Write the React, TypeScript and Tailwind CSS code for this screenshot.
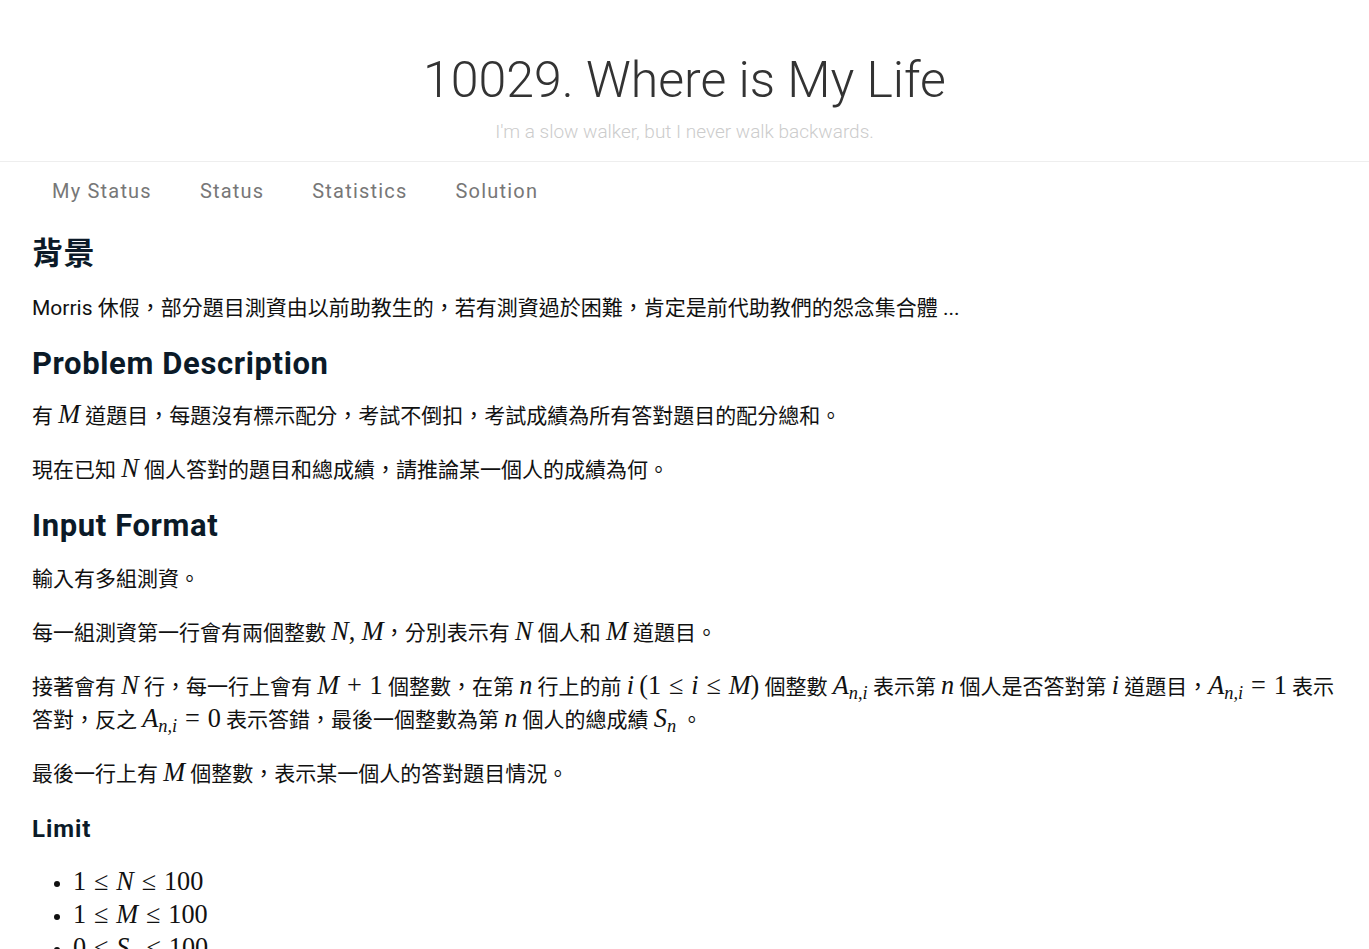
import React from "react";

const nav = ["My Status", "Status", "Statistics", "Solution"];

const cjk = '"Noto Sans CJK TC", "Noto Sans CJK SC", sans-serif';

function V({ children }: { children: React.ReactNode }) {
  return (
    <span className="font-['Liberation_Serif',serif] italic text-[1.25em] leading-none">{children}</span>
  );
}

function R({ children }: { children: React.ReactNode }) {
  return <span className="font-['Liberation_Serif',serif] text-[1.25em] leading-none">{children}</span>;
}

// math operator with MathJax-like spacing
function Op({ children }: { children: React.ReactNode }) {
  return (
    <span className="font-['Liberation_Serif',serif] text-[1.25em] leading-none mx-[0.3em]">{children}</span>
  );
}

function Sub({ base, sub }: { base: string; sub: string }) {
  return (
    <span className="font-['Liberation_Serif',serif] text-[1.25em] leading-none">
      <i>{base}</i>
      <i className="relative top-[0.28em] text-[0.7em] leading-none">{sub}</i>
    </span>
  );
}

export default function App() {
  return (
    <div className="min-h-screen bg-white font-['Roboto','Noto_Sans_CJK_TC',sans-serif]">
      {/* Header */}
      <header className="border-b border-[#eeeeee] pt-[50px] pb-[17px] text-center">
        <h1 className="text-[50px] leading-[60px] font-light text-[#333333]">10029. Where is My Life</h1>
        <p className="mt-[10px] text-[19px] leading-[24px] font-light text-[#cccccc]">
          I'm a slow walker, but I never walk backwards.
        </p>
      </header>

      {/* Nav */}
      <nav className="flex pl-[28px] pt-[12px]">
        {nav.map((item) => (
          <a key={item} className="px-[24px] py-[2px] text-[20px] leading-[30px] tracking-[0.06em] text-[#777777]">
            {item}
          </a>
        ))}
      </nav>

      <main
        className="px-[32px] pt-[6px] text-[21px] leading-[33px] text-[#111111]"
        style={{ fontFamily: `Roboto, ${cjk}` }}
      >
        <h2 className="mt-[20px] mb-[18px] text-[31px] leading-[40px] font-bold tracking-[0.02em] text-[#0b1a28]">
          背景
        </h2>
        <p>Morris 休假，部分題目測資由以前助教生的，若有測資過於困難，肯定是前代助教們的怨念集合體 ...</p>

        <h2 className="mt-[19px] mb-[16px] text-[31px] leading-[40px] font-bold tracking-[0.02em] text-[#0b1a28]">
          Problem Description
        </h2>
        <p>
          有 <V>M</V> 道題目，每題沒有標示配分，考試不倒扣，考試成績為所有答對題目的配分總和。
        </p>
        <p className="mt-[21px]">
          現在已知 <V>N</V> 個人答對的題目和總成績，請推論某一個人的成績為何。
        </p>

        <h2 className="mt-[19px] mb-[17px] text-[31px] leading-[40px] font-bold tracking-[0.02em] text-[#0b1a28]">
          Input Format
        </h2>
        <p>輸入有多組測資。</p>
        <p className="mt-[21px]">
          每一組測資第一行會有兩個整數 <V>N</V>
          <R>, </R>
          <V>M</V>，分別表示有 <V>N</V> 個人和 <V>M</V> 道題目。
        </p>
        <p className="mt-[21px]">
          接著會有 <V>N</V> 行，每一行上會有 <V>M</V>
          <Op>+</Op>
          <R>1</R> 個整數，在第 <V>n</V> 行上的前 <V>i</V> <R>(1</R>
          <Op>≤</Op>
          <V>i</V>
          <Op>≤</Op>
          <V>M</V>
          <R>)</R> 個整數 <Sub base="A" sub="n,i" /> 表示第 <V>n</V> 個人是否答對第 <V>i</V> 道題目，
          <Sub base="A" sub="n,i" />
          <Op>=</Op>
          <R>1</R> 表示<span className="whitespace-nowrap">答對</span>，反之 <Sub base="A" sub="n,i" />
          <Op>=</Op>
          <R>0</R> 表示答錯，最後一個整數為第 <V>n</V> 個人的總成績 <Sub base="S" sub="n" /> 。
        </p>
        <p className="mt-[21px]">
          最後一行上有 <V>M</V> 個整數，表示某一個人的答對題目情況。
        </p>

        <h3 className="mt-[20px] mb-[20px] text-[24px] leading-[36px] font-bold tracking-[0.04em] text-[#0b1a28]">
          Limit
        </h3>
        <ul className="list-disc pl-[41px]">
          <li>
            <R>1</R>
            <Op>≤</Op>
            <V>N</V>
            <Op>≤</Op>
            <R>100</R>
          </li>
          <li>
            <R>1</R>
            <Op>≤</Op>
            <V>M</V>
            <Op>≤</Op>
            <R>100</R>
          </li>
          <li>
            <R>0</R>
            <Op>≤</Op>
            <Sub base="S" sub="n" />
            <Op>≤</Op>
            <R>100</R>
          </li>
        </ul>
      </main>
    </div>
  );
}
